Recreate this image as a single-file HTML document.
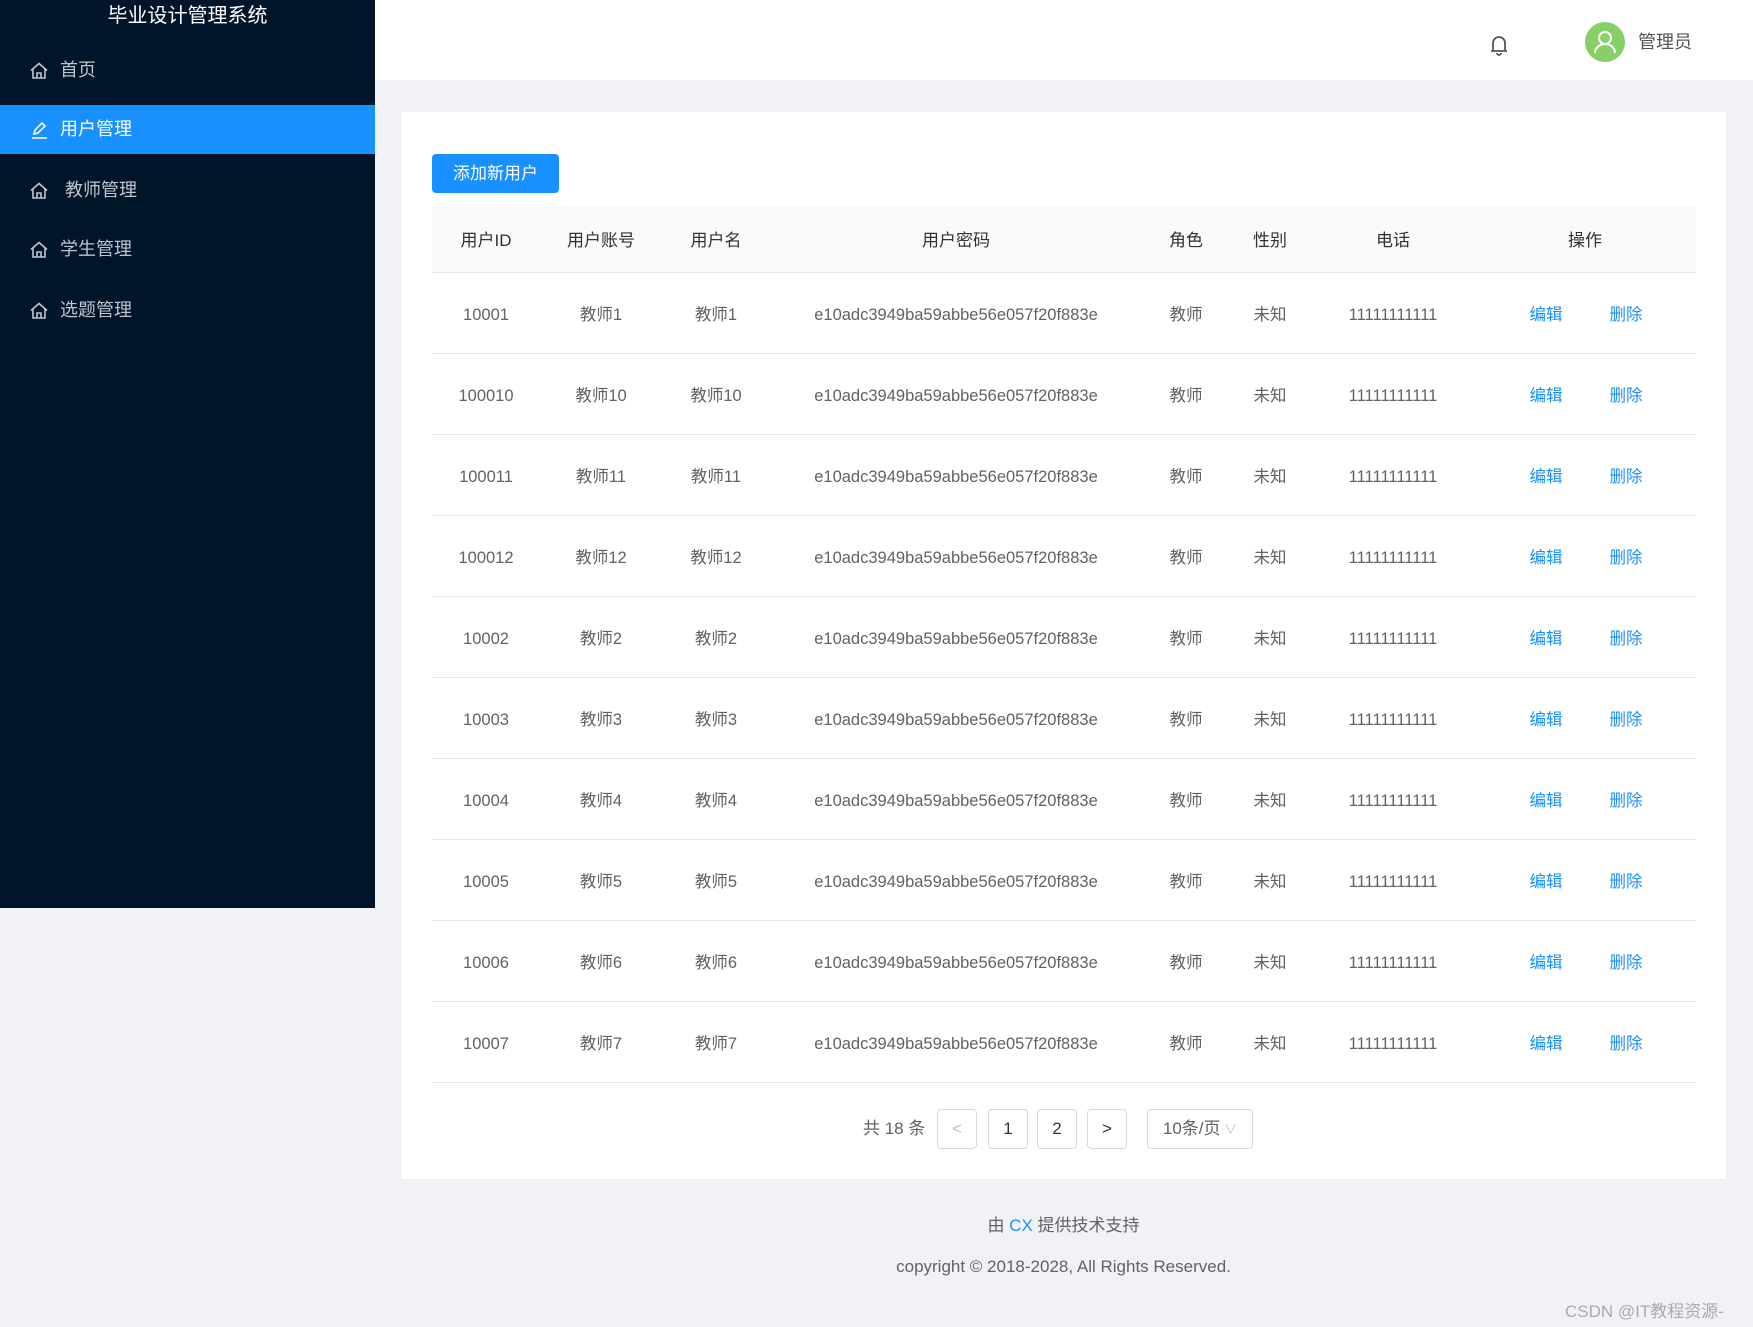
<!DOCTYPE html>
<html><head><meta charset="utf-8"><style>
*{margin:0;padding:0;box-sizing:border-box}
body{width:1753px;height:1327px;background:#f0f2f5;font-family:"Liberation Sans","Noto Sans CJK SC",sans-serif;position:relative;overflow:hidden;color:#606266}
.side{position:absolute;left:0;top:0;width:375px;height:908px;background:#001529}
.title{position:absolute;left:0;width:375px;top:2px;text-align:center;color:#fff;font-size:20px;line-height:28px}
.mi{position:absolute;left:0;width:375px;height:49px;color:#c0c4cc;font-size:18px;line-height:49px;padding-left:60px}
.mi svg{position:absolute;left:29px;top:15px}
.mi.act{background:#1890ff;color:#fff}
.hdr{position:absolute;left:375px;top:0;width:1378px;height:80px;background:#fff}
.card{position:absolute;left:400px;top:111px;width:1327px;height:1069px;background:#fff;border:1px solid #ebeef5}
.btn{position:absolute;left:432px;top:154px;width:127px;height:39px;background:#1890ff;border-radius:4px;color:#fff;font-size:17px;line-height:39px;text-align:center}
.th{position:absolute;left:432px;top:206px;width:1264px;height:67px;background:#fafafa;border-bottom:1px solid #e8e8e8}
.row{position:absolute;left:432px;width:1264px;height:81px;border-bottom:1px solid #e8e8e8}
.c{position:absolute;top:0;transform:translateX(-50%);white-space:nowrap;font-size:16.5px}
.th .c{line-height:70px;color:#303133;font-size:17px}
.row .c{line-height:84px}
.a{color:#1890ff}
.pg{position:absolute;top:1109px;height:40px;border:1px solid #d9d9d9;border-radius:4px;text-align:center;line-height:38px;font-size:17px;color:#333}
.ft{position:absolute;left:400px;width:1327px;text-align:center;font-size:17px;color:#606266}
</style></head><body>
<div class="side">
<div class="title">毕业设计管理系统</div>
<div class="mi" style="top:46px"><svg width="20" height="20" viewBox="0 0 20 20" fill="none" stroke="#c0c4cc" stroke-width="1.6"><path d="M2 9.5L10 2.5 18 9.5M4 8v9h12V8M8 17v-5h4v5"/></svg>首页</div>
<div class="mi act" style="top:105px"><svg width="20" height="20" viewBox="0 0 20 20" fill="none" stroke="#fff" stroke-width="1.6"><path d="M3 18h15M5 14l1-4 7-7 3 3-7 7z"/></svg>用户管理</div>
<div class="mi" style="top:166px;padding-left:65px"><svg width="20" height="20" viewBox="0 0 20 20" fill="none" stroke="#c0c4cc" stroke-width="1.6"><path d="M2 9.5L10 2.5 18 9.5M4 8v9h12V8M8 17v-5h4v5"/></svg>教师管理</div>
<div class="mi" style="top:225px"><svg width="20" height="20" viewBox="0 0 20 20" fill="none" stroke="#c0c4cc" stroke-width="1.6"><path d="M2 9.5L10 2.5 18 9.5M4 8v9h12V8M8 17v-5h4v5"/></svg>学生管理</div>
<div class="mi" style="top:286px"><svg width="20" height="20" viewBox="0 0 20 20" fill="none" stroke="#c0c4cc" stroke-width="1.6"><path d="M2 9.5L10 2.5 18 9.5M4 8v9h12V8M8 17v-5h4v5"/></svg>选题管理</div>
</div>
<div class="hdr">
<svg style="position:absolute;left:1114px;top:33px" width="20" height="24" viewBox="0 0 20 24" fill="none" stroke="#555" stroke-width="1.8"><path d="M4 18V10a6 6 0 0 1 12 0v8M2 18h16M8 20a2 2 0 0 0 4 0"/></svg>
<div style="position:absolute;left:1210px;top:22px;width:40px;height:40px;border-radius:50%;background:#87d068"><svg width="40" height="40" viewBox="0 0 40 40" fill="none" stroke="#fff" stroke-width="2"><circle cx="20" cy="16" r="6"/><path d="M10 31a10 9 0 0 1 20 0"/></svg></div>
<div style="position:absolute;left:1263px;top:28px;font-size:18px;color:#555">管理员</div>
</div>
<div class="card"></div>
<div class="btn">添加新用户</div>
<div class="th">
<div class="c" style="left:54px">用户ID</div><div class="c" style="left:169px">用户账号</div><div class="c" style="left:284px">用户名</div><div class="c" style="left:524px">用户密码</div><div class="c" style="left:754px">角色</div><div class="c" style="left:838px">性别</div><div class="c" style="left:961px">电话</div><div class="c" style="left:1153px">操作</div>
</div>
<div id="rows"></div>
<div style="position:absolute;left:863px;top:1109px;line-height:40px;font-size:17px;color:#606266">共 18 条</div>
<div class="pg" style="left:937px;width:40px;color:#c0c4cc">&lt;</div>
<div class="pg" style="left:988px;width:40px">1</div>
<div class="pg" style="left:1037px;width:40px">2</div>
<div class="pg" style="left:1087px;width:40px">&gt;</div>
<div class="pg" style="left:1147px;width:106px;color:#606266">10条/页<span style="color:#c0c4cc;font-size:13px"> ∨</span></div>
<div class="ft" style="top:1211px">由 <span class="a">CX</span> 提供技术支持</div>
<div class="ft" style="top:1257px">copyright © 2018-2028, All Rights Reserved.</div>
<div style="position:absolute;left:1565px;top:1297px;font-size:17px;color:#aaa">CSDN @IT教程资源-</div>
<script>
var ids=[["10001","1"],["100010","10"],["100011","11"],["100012","12"],["10002","2"],["10003","3"],["10004","4"],["10005","5"],["10006","6"],["10007","7"]];
var h="";
ids.forEach(function(r,i){
var t=273+i*81;
h+='<div class="row" style="top:'+t+'px"><div class="c" style="left:54px">'+r[0]+'</div><div class="c" style="left:169px">教师'+r[1]+'</div><div class="c" style="left:284px">教师'+r[1]+'</div><div class="c" style="left:524px">e10adc3949ba59abbe56e057f20f883e</div><div class="c" style="left:754px">教师</div><div class="c" style="left:838px">未知</div><div class="c" style="left:961px">11111111111</div><div class="c a" style="left:1114px">编辑</div><div class="c a" style="left:1194px">删除</div></div>';
});
document.getElementById("rows").innerHTML=h;
</script>
</body></html>
